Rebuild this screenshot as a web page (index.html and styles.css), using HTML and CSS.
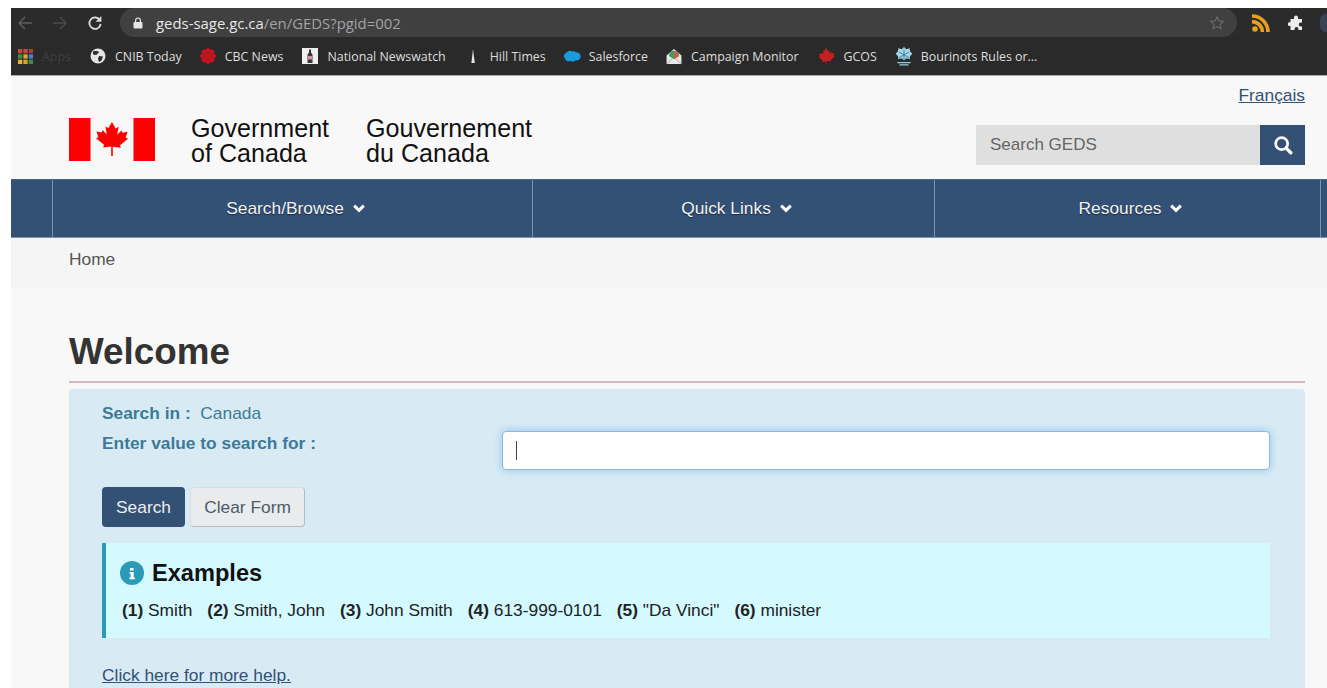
FILE: index.html
```html
<!DOCTYPE html>
<html lang="en">
<head>
<meta charset="utf-8">
<title>GEDS</title>
<link rel="stylesheet" href="styles.css">
</head>
<body>
<div class="window">
  <div class="toolbar">
    <svg class="tb-icon back" width="16" height="16" viewBox="0 0 16 16"><path d="M15 8H2M8 2L2 8l6 6" fill="none" stroke="#5f5f5f" stroke-width="1.4"/></svg>
    <svg class="tb-icon forward" width="16" height="16" viewBox="0 0 16 16"><path d="M1 8h13M8 2l6 6-6 6" fill="none" stroke="#4c4c4c" stroke-width="1.4"/></svg>
    <svg class="tb-icon reload" width="16" height="16" viewBox="0 0 16 16"><path d="M12.800 5A5.700 5.700 0 1 0 13.700 9" fill="none" stroke="#dcdcdc" stroke-width="1.800"/><path d="M14.400 1v5.800H8.600z" fill="#dcdcdc"/></svg>
    <div class="omnibox">
      <svg class="lock" width="10" height="12" viewBox="0 0 10 12"><path d="M2.600 5V3.400a2.400 2.400 0 0 1 4.800 0V5" fill="none" stroke="#e6e6e6" stroke-width="1.200"/><rect x="0.500" y="5" width="9" height="6.600" rx="1" fill="#e6e6e6"/></svg>
      <span class="url"><span class="url-host">geds-sage.gc.ca</span>/en/GEDS?pgid=002</span>
      <svg class="star" width="16" height="16" viewBox="0 0 16 16"><path d="M8 1.800l1.900 4.100 4.500.5-3.300 3 .9 4.400L8 11.600l-4 2.200.9-4.400-3.300-3 4.500-.5z" fill="none" stroke="#6a6a6a" stroke-width="1.100"/></svg>
    </div>
    <svg class="rss" width="18" height="18" viewBox="0 0 18 18"><circle cx="3" cy="15" r="2.800" fill="#e9a020"/><path d="M0 7.600a10.400 10.400 0 0 1 10.400 10.400M0 2a16 16 0 0 1 16 16" fill="none" stroke="#e9a020" stroke-width="3.600"/></svg>
    <svg class="puzzle" width="16" height="16" viewBox="0 0 16 16"><path d="M6 2.600a2 2 0 0 1 4 0V4h4v3.600h-1.300a1.900 1.900 0 0 0 0 3.800H14V15H10.400v-1.200a1.900 1.900 0 0 0-3.800 0V15H2.500v-4H1.400a1.900 1.900 0 0 1 0-3.800h1.100V4H6z" fill="#ececec"/></svg>
    <span class="avatar"></span>
  </div>

  <div class="bookmarks">
    <span class="bm bm-apps">
      <svg width="15" height="15" viewBox="0 0 14 14"><g>
        <rect width="4" height="4" fill="#d6453d"/><rect x="5" width="4" height="4" fill="#c9473f"/><rect x="10" width="4" height="4" fill="#a8413a"/>
        <rect y="5" width="4" height="4" fill="#3f8f4f"/><rect x="5" y="5" width="4" height="4" fill="#e0a92c"/><rect x="10" y="5" width="4" height="4" fill="#4a7fd0"/>
        <rect y="10" width="4" height="4" fill="#e6b52c"/><rect x="5" y="10" width="4" height="4" fill="#d8a72a"/><rect x="10" y="10" width="4" height="4" fill="#3f8f4f"/>
      </g></svg>
      <span class="apps-label">Apps</span>
    </span>
    <span class="bm bm-cnib">
      <svg width="16" height="16" viewBox="0 0 16 16"><circle cx="8" cy="8" r="7.500" fill="#e4e4e4"/><path d="M3 3.500c2-.8 5-.5 6 .5L7 6.500 4.500 7 3 6zM9 8l4 .5-1.500 4-2.500 1.500-1-3z" fill="#2c2c2c"/></svg>
      CNIB Today
    </span>
    <span class="bm bm-cbc">
      <svg width="16" height="16" viewBox="0 0 16 16"><g fill="#c8141c"><circle cx="8" cy="8" r="3.200"/><circle cx="8" cy="2.400" r="2.400"/><circle cx="8" cy="13.600" r="2.400"/><circle cx="2.400" cy="8" r="2.400"/><circle cx="13.600" cy="8" r="2.400"/><circle cx="4" cy="4" r="2.400"/><circle cx="12" cy="4" r="2.400"/><circle cx="4" cy="12" r="2.400"/><circle cx="12" cy="12" r="2.400"/></g></svg>
      CBC News
    </span>
    <span class="bm bm-nn">
      <svg width="16" height="16" viewBox="0 0 16 16"><rect width="16" height="16" fill="#efefef"/><path d="M7 1.500h2v3l1.500 2V15h-5V6.500L7 4.500z" fill="#3a3440"/><rect x="6" y="8" width="4" height="3.500" fill="#cf8f9c"/></svg>
      National Newswatch
    </span>
    <span class="bm bm-hill">
      <svg width="10" height="16" viewBox="0 0 10 16"><path d="M5 1l1.800 14H3.400z" fill="#e4e4e4"/></svg>
      Hill Times
    </span>
    <span class="bm bm-sf">
      <svg width="18" height="13" viewBox="0 0 16 12"><path d="M4 1.500c1.500-1.200 3-1 4 0 1.500-.8 3-.3 3.500.6C14 2 16 3.800 16 6c0 2.400-2.200 4-4.500 3.500-1 1.500-3.500 1.700-4.800.6C4.500 11 2 10 1.800 8 0 7 0 4 2 3.300 2.300 2.500 3 1.800 4 1.500z" fill="#1a9cdc"/></svg>
      Salesforce
    </span>
    <span class="bm bm-cm">
      <svg width="18" height="17" viewBox="0 0 16 16"><path d="M1 7l7-6 7 6v8H1z" fill="#e8e8e8"/><path d="M3.200 7.500a4.800 4.800 0 0 1 9.600 0L8 10.500z" fill="#3f9d5a"/><path d="M8 3a4.800 4.800 0 0 1 4.800 4.500L8 10.500z" fill="#cf5a4a"/><path d="M1 15l5.500-5M15 15l-5.500-5" stroke="#a0a0a0" stroke-width=".8"/></svg>
      Campaign Monitor
    </span>
    <span class="bm bm-gcos">
      <svg width="18" height="18" viewBox="0 0 16 16"><path d="M8 .5l1.600 3 1.400-.7-.5 3.400 2-2 .6 1.500 2.400-.4-.8 2.600 1 .6-3.500 3 .4 1.300-3.800-.5V15.500h-.4V12.800l-3.800.5.400-1.300-3.500-3 1-.6-.8-2.600 2.400.4.600-1.500 2 2L5 2.800l1.400.7z" fill="#c9201f"/></svg>
      GCOS
    </span>
    <span class="bm bm-bour">
      <svg width="18" height="20" viewBox="0 0 16 18"><path d="M8 1l2 2 3-1 .5 3 2 2-2 2-.5 3-3-1-2 2-2-2-3 1-.5-3-2-2 2-2 .5-3 3 1z" fill="#a6d8ea"/><path d="M8 3v10M3.500 5.500l9 5M12.500 5.500l-9 5" stroke="#3f7f9a" stroke-width=".9"/><path d="M2 15h12M4 17h8" stroke="#8fd0e6" stroke-width="1.200"/></svg>
      Bourinots Rules or...
    </span>
  </div>

  <div class="page">
    <header class="site-head">
      <a class="lang" href="#">Français</a>
      <div class="brand-row">
        <svg class="flag" width="86" height="44" viewBox="0 0 86 44"><rect width="21.500" height="43" fill="#f00"/><rect x="64.500" width="21.500" height="43" fill="#f00"/><path d="M43 4l3.600 6.400 3-1.600-1.400 8 4.200-4.300 1 2.300 5.100-1-1.800 5.800 2.300 1.100-8 6.500.8 2.600-8-1V38h-1.600v-9.600l-8 1 .8-2.600-8-6.500 2.300-1.100-1.800-5.800 5.100 1 1-2.300 4.200 4.300-1.400-8 3 1.600z" fill="#f00"/></svg>
        <div class="sig"><span>Government</span><span>of Canada</span></div>
        <div class="sig sig-fr"><span>Gouvernement</span><span>du Canada</span></div>
        <form class="site-search">
          <span class="site-search-field">Search GEDS</span>
          <span class="site-search-btn">
            <svg width="20" height="20" viewBox="0 0 18 18"><circle cx="7.800" cy="7.800" r="5.400" fill="none" stroke="#fff" stroke-width="2.400"/><path d="M11.800 11.800L16 16" stroke="#fff" stroke-width="3" stroke-linecap="round"/></svg>
          </span>
        </form>
      </div>
    </header>

    <nav class="menu">
      <span class="menu-stub"></span>
      <a class="menu-item item-search" href="#">Search/Browse <svg class="chev" width="12" height="9" viewBox="0 0 12 9"><path d="M1.200 1.600L6 6.400l4.800-4.800" fill="none" stroke="#fff" stroke-width="3"/></svg></a>
      <a class="menu-item item-links" href="#">Quick Links <svg class="chev" width="12" height="9" viewBox="0 0 12 9"><path d="M1.200 1.600L6 6.400l4.800-4.800" fill="none" stroke="#fff" stroke-width="3"/></svg></a>
      <a class="menu-item item-res" href="#">Resources <svg class="chev" width="12" height="9" viewBox="0 0 12 9"><path d="M1.200 1.600L6 6.400l4.800-4.800" fill="none" stroke="#fff" stroke-width="3"/></svg></a>
    </nav>

    <div class="crumbs">Home</div>

    <main class="content">
      <h1 class="title">Welcome</h1>
      <section class="panel">
        <div class="fields">
          <div class="labels">
            <p class="row-in"><b>Search in :</b>&nbsp; Canada</p>
            <p class="row-value"><b>Enter value to search for :</b></p>
          </div>
          <div class="query"><span class="caret"></span></div>
        </div>
        <div class="actions">
          <button class="btn btn-primary" type="button">Search</button>
          <button class="btn btn-plain" type="button">Clear Form</button>
        </div>
        <div class="examples">
          <h2 class="examples-title">
            <svg width="24" height="24" viewBox="0 0 24 24"><circle cx="12" cy="12" r="12" fill="#2b9ab8"/><path d="M10 7h3.600v2.600H10zM9.500 11h4.200v5.500h1.300v1.800H9.400v-1.800h1.300v-3.700H9.500z" fill="#fff"/></svg>
            Examples
          </h2>
          <p class="examples-list"><b>(1)</b> Smith<b class="n">(2)</b> Smith, John<b class="n">(3)</b> John Smith<b class="n">(4)</b> 613-999-0101<b class="n">(5)</b> "Da Vinci"<b class="n">(6)</b> minister</p>
        </div>
        <a class="help" href="#">Click here for more help.</a>
      </section>
    </main>
  </div>
</div>
</body>
</html>
```

FILE: styles.css
```css
html, body {
  margin: 0;
  height: 100%;
  overflow: hidden;
  background: #fff;
}

.window {
  height: 680px;
  margin: 8px 0 0 11px;
  display: flex;
  flex-direction: column;
  overflow: hidden;
  font-family: "Liberation Sans", Arial, sans-serif;
}

/* Browser toolbar */
.toolbar {
  height: 29px;
  flex: none;
  display: flex;
  align-items: center;
  background: #2b2b2b;
}
.tb-icon { flex: none; }
.back { margin-left: 6px; }
.forward { margin-left: 19px; }
.reload { margin-left: 19px; }

.omnibox {
  flex: none;
  width: 1117px;
  height: 29px;
  margin-left: 17px;
  display: flex;
  align-items: center;
  border-radius: 15px;
  background: #404040;
}
.lock { margin-left: 13px; flex: none; }
.url {
  margin-left: 13px;
  font: 14.900px "Open Sans", sans-serif;
  color: #a3a3a3;
}
.url-host { color: #e8e8e8; }
.star { margin-left: auto; margin-right: 12px; }
.rss { margin-left: 15px; flex: none; }
.puzzle { margin-left: 18px; flex: none; }
.avatar {
  margin-left: 16px;
  width: 12px;
  height: 18px;
  border-radius: 6px 0 0 6px;
  background: #3a4152;
  flex: none;
}

/* Bookmarks bar */
.bookmarks {
  height: 38px;
  flex: none;
  display: flex;
  align-items: center;
  background: #2a2a2a;
  border-bottom: 1px solid #a9a9a9;
  font: 12.400px "Open Sans", sans-serif;
  color: #dedede;
  white-space: nowrap;
}
.bm {
  display: flex;
  align-items: center;
  gap: 8px;
  flex: none;
}
.bm-apps { margin-left: 7px; gap: 9px; width: 72px; }
.apps-label { color: #3f3f3f; }
.bm-cnib { gap: 9px; }
.bm-cbc { margin-left: 18px; gap: 9px; }
.bm-nn { margin-left: 19px; gap: 9px; }
.bm-hill { margin-left: 22px; gap: 12px; }
.bm-sf { margin-left: 17px; }
.bm-cm { margin-left: 17px; }
.bm-gcos { margin-left: 18px; gap: 9px; }
.bm-bour { margin-left: 18px; }

/* GC page */
.page {
  flex: 1;
  min-height: 0;
  background: #f8f8f8;
  color: #333;
  font-size: 17.350px;
}

.site-head {
  height: 103px;
  display: flex;
  flex-direction: column;
  padding: 0 22px 0 58px;
}
.lang {
  align-self: flex-end;
  margin-top: 9px;
  line-height: 20px;
  color: #335075;
}
.brand-row {
  display: flex;
  align-items: flex-start;
  margin-top: 13px;
}
.flag { flex: none; }
.sig {
  display: flex;
  flex-direction: column;
  margin: -2px 0 0 36px;
  font-size: 25.100px;
  line-height: 25px;
  color: #111;
}
.sig-fr { margin-left: 37px; }
.site-search {
  margin: 7px 0 0 auto;
  display: flex;
  height: 40px;
}
.site-search-field {
  width: 270px;
  padding-left: 14px;
  background: #dfdfdf;
  color: #666;
  font-size: 17px;
  line-height: 40px;
}
.site-search-btn {
  width: 45px;
  background: #335075;
  display: flex;
  align-items: center;
  justify-content: center;
}

.menu {
  height: 59px;
  flex: none;
  display: flex;
  background: #335075;
  border-top: 1px solid #4a6283;
  border-bottom: 1px solid #7d93ad;
  box-sizing: border-box;
}
.menu-stub {
  width: 41px;
  flex: none;
  border-right: 1px solid #7d93ad;
}
.menu-item {
  flex: none;
  display: flex;
  align-items: center;
  justify-content: center;
  gap: 9px;
  padding-left: 6px;
  box-sizing: border-box;
  color: #f2f2f2;
  text-decoration: none;
  border-right: 1px solid #7d93ad;
  text-shadow: 0 1px 1px rgba(0, 0, 0, .5);
}
.item-search { width: 480px; }
.item-links { width: 402px; }
.item-res { width: 386px; }

.crumbs {
  height: 50px;
  padding-left: 58px;
  background: #f5f5f5;
  line-height: 43px;
  color: #555;
}

.content { padding: 0 22px 0 58px; }
.title {
  margin: 0;
  padding: 43px 0 8px;
  font-size: 36.800px;
  line-height: 42px;
  font-weight: 700;
  border-bottom: 2px solid #d3b9bd;
  color: #333;
}

.panel {
  margin-top: 6px;
  padding: 14px 35px 0 33px;
  height: 300px;
  background: #d8ebf5;
  border-radius: 4px;
  color: #3d7a95;
}
.fields {
  display: flex;
  justify-content: space-between;
}
.labels p { margin: 0; line-height: 20px; }
.labels .row-value { margin-top: 10px; }
.query {
  width: 766px;
  height: 37px;
  margin-top: 28px;
  background: #fff;
  border: 1px solid #8fb8d6;
  border-radius: 4px;
  box-shadow: 0 0 9px rgba(102, 175, 233, .65);
  display: flex;
  align-items: center;
}
.caret {
  width: 1px;
  height: 19px;
  margin-left: 13px;
  background: #444;
}

.actions {
  display: flex;
  gap: 5px;
  margin-top: 17px;
}
.btn {
  height: 40px;
  font: 17.350px "Liberation Sans", Arial, sans-serif;
  border-radius: 4px;
  padding: 0;
}
.btn-primary {
  width: 83px;
  background: #335075;
  color: #eee;
  border: 0;
}
.btn-plain {
  width: 115px;
  background: #eaebed;
  color: #4d5b66;
  border: 1px solid #dcdcdc;
  border-right-color: #b8bcc0;
  border-bottom-color: #b8bcc0;
}

.examples {
  margin-top: 16px;
  height: 95px;
  box-sizing: border-box;
  padding: 16px 0 0 14px;
  background: #d4f9ff;
  border-left: 4px solid #2b9ab8;
  color: #222;
}
.examples-title {
  display: flex;
  align-items: center;
  gap: 8px;
  margin: 0;
  font-size: 23.600px;
  line-height: 28px;
  font-weight: 700;
  color: #111;
}
.examples-list {
  margin: 13px 0 0 2px;
  font-size: 17.350px;
  line-height: 20px;
}
.n { margin-left: 15px; }

.help {
  display: block;
  margin-top: 27px;
  line-height: 20px;
  color: #335075;
}
```
